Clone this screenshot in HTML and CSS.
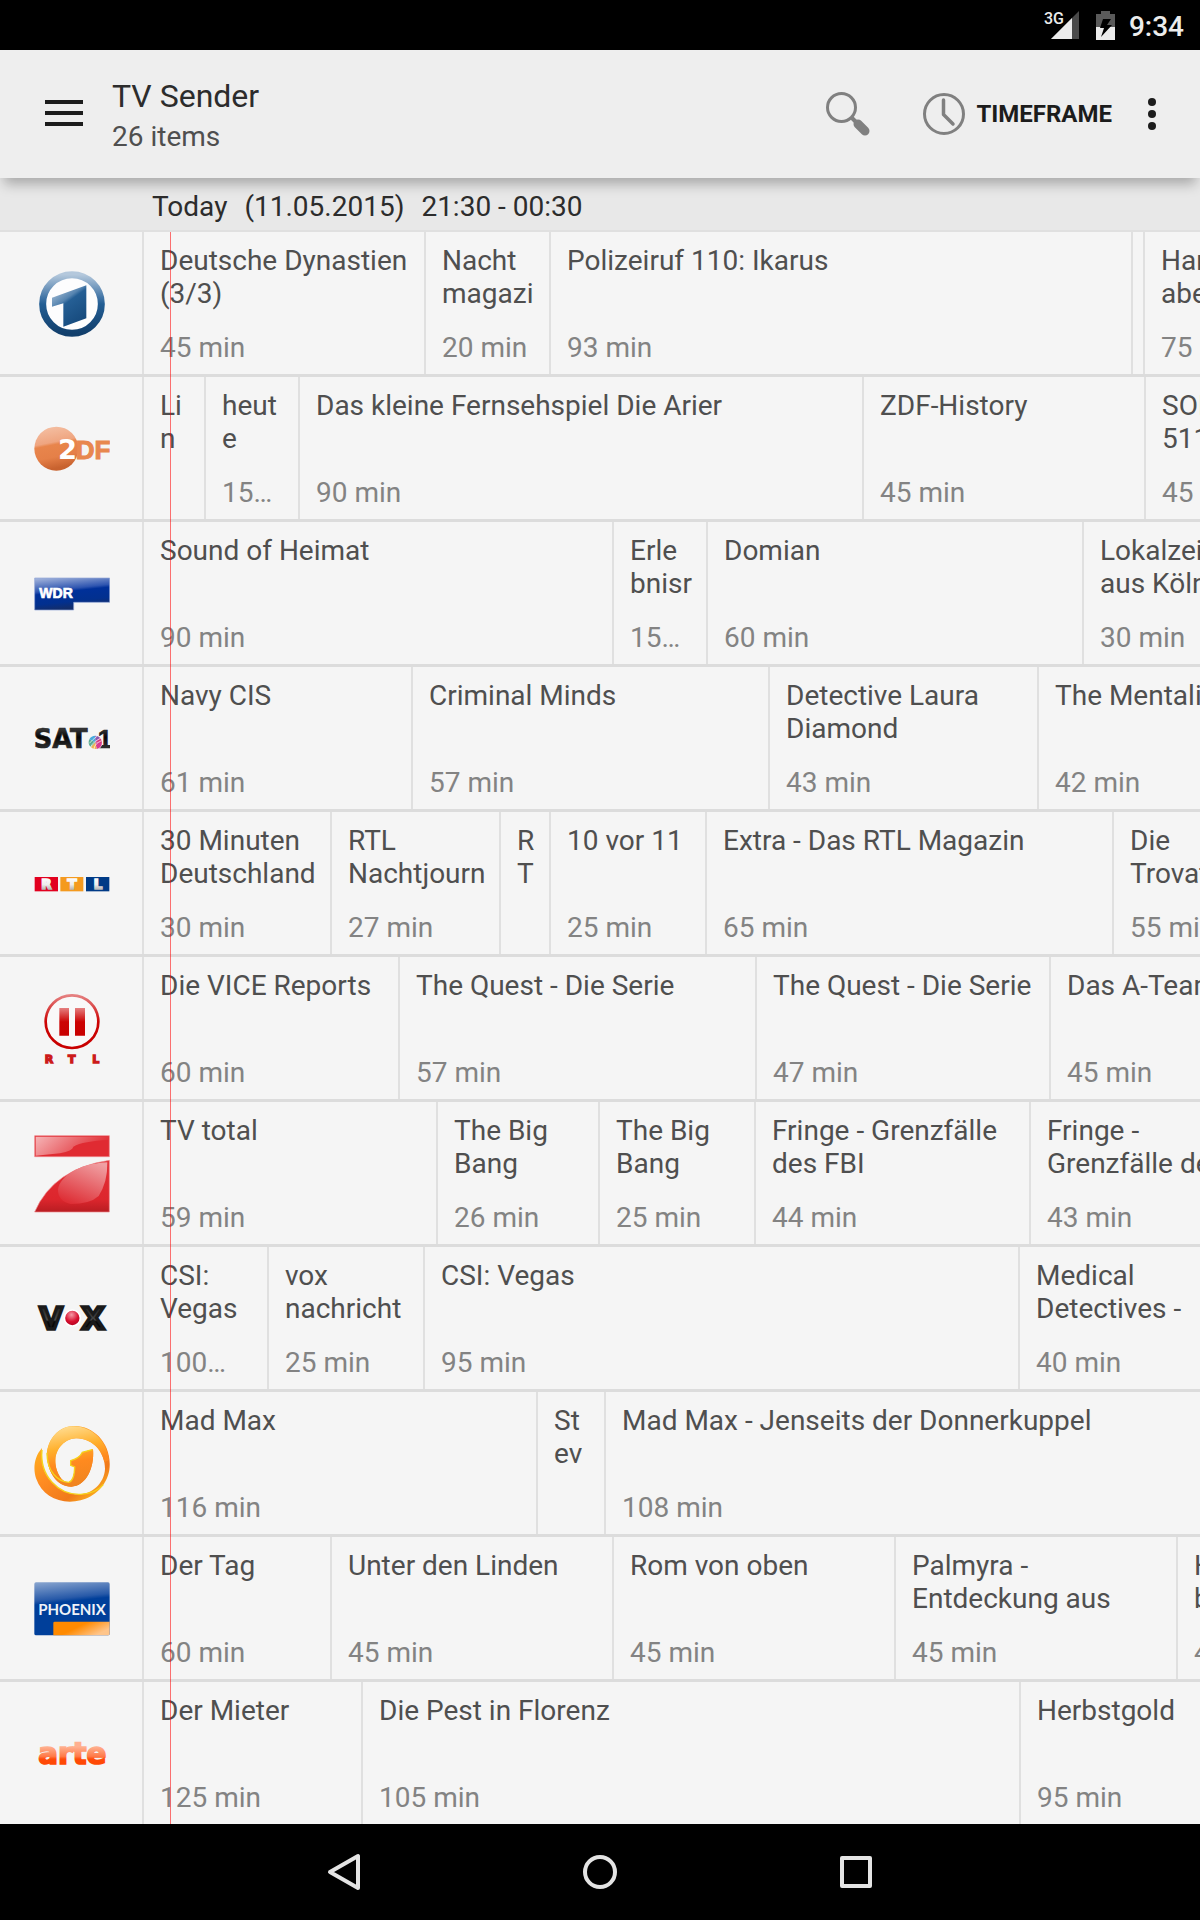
FILE: index.html
```html
<!DOCTYPE html>
<html lang="de">
<head>
<meta charset="utf-8">
<meta name="viewport" content="width=device-width, initial-scale=1">
<title>TV Sender</title>
<link rel="stylesheet" href="styles.css">
</head>
<body>
<div class="screen">
  <div class="status">
    <svg class="signal" viewBox="0 0 36 30" aria-label="3G">
      <path d="M35 1V29H7Z" fill="#4a4a4a"/>
      <path d="M28 8V29H7Z" fill="#ececec"/>
      <text x="0" y="14" class="network">3G</text>
    </svg>
    <svg class="battery" viewBox="0 0 19 29" aria-label="Battery">
      <path d="M0 3H5V0H14V3H19V16H0Z" fill="#5a5a5a"/>
      <path d="M0 16H19V29H0Z" fill="#ececec"/>
      <path d="M7 8H15L11 14H16L5 26L8 17H4Z" fill="#000"/>
    </svg>
    <time>9:34</time>
  </div>

  <header class="appbar">
    <button class="icon-button menu" aria-label="Menu">
      <svg width="38" height="28" viewBox="0 0 38 28"><path d="M0 2H38M0 13H38M0 24H38" stroke="#1c1c1c" stroke-width="4"/></svg>
    </button>
    <div class="titles">
      <h1>TV Sender</h1>
      <p>26 items</p>
    </div>
    <button class="icon-button search" aria-label="Search">
      <svg width="44" height="44" viewBox="0 0 44 44">
        <circle cx="15.500" cy="15.500" r="14" fill="none" stroke="#808080" stroke-width="3"/>
        <path d="M26 26L31 31" stroke="#808080" stroke-width="4"/>
        <path d="M32 32L39 39" stroke="#808080" stroke-width="9" stroke-linecap="round"/>
      </svg>
    </button>
    <button class="icon-button timeframe">
      <svg width="44" height="44" viewBox="0 0 44 44" fill="none" stroke="#808080">
        <circle cx="22" cy="22" r="19.500" stroke-width="3"/>
        <path d="M21.500 8V22.500L31 32" stroke-width="3.500" stroke-linecap="round" stroke-linejoin="round"/>
      </svg>
      Timeframe
    </button>
    <button class="icon-button more" aria-label="More options">
      <svg width="8" height="32" viewBox="0 0 8 32" fill="#1c1c1c"><circle cx="4" cy="4" r="4"/><circle cx="4" cy="16" r="4"/><circle cx="4" cy="28" r="4"/></svg>
    </button>
  </header>

  <h2 class="range"><span>Today</span> <span>(11.05.2015)</span> <span>21:30 - 00:30</span></h2>

  <main class="guide">
    <section class="channel" aria-label="Das Erste">
      <div class="logo"><svg viewBox="102 99 228 240">
        <defs><linearGradient id="ard" x1="0" y1="0" x2="0" y2="1"><stop offset="0" stop-color="#b4c8dc"/><stop offset=".4" stop-color="#3f73a5"/><stop offset=".5" stop-color="#235e94"/><stop offset="1" stop-color="#123f6c"/></linearGradient>
        <linearGradient id="ard1" x1="0" y1="0" x2=".6" y2="1"><stop offset="0" stop-color="#c6d5e4"/><stop offset=".42" stop-color="#5684b0"/><stop offset=".5" stop-color="#255f95"/><stop offset="1" stop-color="#174b7e"/></linearGradient></defs>
        <circle cx="216" cy="222" r="88" fill="#fdfdfe" stroke="url(#ard)" stroke-width="21"/>
        <path d="M156 203L259 166V265L190 290V220L156 230Z" fill="url(#ard1)"/>
      </svg></div>
      <ol class="programmes">
        <li style="width:282px"><h3>Deutsche Dynastien (3/3)</h3><p>45 min</p></li>
        <li style="width:125px"><h3>Nacht magazi</h3><p>20 min</p></li>
        <li style="width:582px"><h3>Polizeiruf 110: Ikarus</h3><p>93 min</p></li>
        <li class="sliver" style="width:12px"></li>
        <li><h3>Hart aber</h3><p>75 min</p></li>
      </ol>
    </section>

    <section class="channel" aria-label="ZDF">
      <div class="logo"><svg viewBox="102 534 228 240">
        <defs><linearGradient id="zdf" x1="0" y1="0" x2=".2" y2="1"><stop offset="0" stop-color="#f5c3a8"/><stop offset=".42" stop-color="#efa580"/><stop offset=".48" stop-color="#e8854c"/><stop offset=".75" stop-color="#e58048"/><stop offset="1" stop-color="#c8622f"/></linearGradient></defs>
        <circle cx="169" cy="656" r="66" fill="url(#zdf)"/>
        <text x="174" y="687" font-size="82" class="wide" fill="#fff">2</text>
        <text x="227" y="686" font-size="78" class="narrow" fill="#e8874f" stroke="#e8874f" stroke-width="3">DF</text>
      </svg></div>
      <ol class="programmes">
        <li style="width:62px"><h3>Lin</h3></li>
        <li style="width:94px"><h3>heute</h3><p>15…</p></li>
        <li style="width:564px"><h3>Das kleine Fernsehspiel Die Arier</h3><p>90 min</p></li>
        <li style="width:282px"><h3>ZDF-History</h3><p>45 min</p></li>
        <li><h3>SOKO 5113</h3><p>45 min</p></li>
      </ol>
    </section>

    <section class="channel" aria-label="WDR">
      <div class="logo"><svg viewBox="102 969 228 240">
        <defs><linearGradient id="wdr" x1="0" y1="0" x2=".25" y2="1"><stop offset="0" stop-color="#a9b9de"/><stop offset=".42" stop-color="#2e55b0"/><stop offset=".5" stop-color="#003099"/><stop offset=".8" stop-color="#02308f"/><stop offset="1" stop-color="#132d6a"/></linearGradient></defs>
        <path d="M104 1044H329V1117H221V1140H104Z" fill="url(#wdr)" stroke="#8ea5d6" stroke-width="2"/>
        <text x="118" y="1103" font-size="42" class="narrow" fill="#fff" stroke="#fff" stroke-width="2">WDR</text>
      </svg></div>
      <ol class="programmes">
        <li style="width:470px"><h3>Sound of Heimat</h3><p>90 min</p></li>
        <li style="width:94px"><h3>Erle<wbr>bnisr</h3><p>15…</p></li>
        <li style="width:376px"><h3>Domian</h3><p>60 min</p></li>
        <li><h3>Lokalzeit aus Köln</h3><p>30 min</p></li>
      </ol>
    </section>

    <section class="channel" aria-label="SAT.1">
      <div class="logo"><svg viewBox="102 114 228 240">
        <defs><linearGradient id="sat" x1="0" y1="0" x2="0" y2="1"><stop offset="0" stop-color="#555"/><stop offset=".45" stop-color="#050505"/><stop offset="1" stop-color="#444"/></linearGradient></defs>
        <text x="101" y="263" font-size="77" class="wide" fill="url(#sat)" stroke="#222" stroke-width="2">SAT</text>
        <text x="293" y="263" font-size="77" class="narrow" fill="url(#sat)" stroke="#222" stroke-width="2">1</text>
        <circle cx="286" cy="247" r="22" fill="#f5f5f5"/>
        <path d="M286 247L268 238A20 20 0 0 1 286 227Z" fill="#48a9dc"/>
        <path d="M286 247V227A20 20 0 0 1 300 233Z" fill="#8a57ae"/>
        <path d="M286 247L300 233A20 20 0 0 1 306 250Z" fill="#d8367b"/>
        <path d="M286 247L306 250A20 20 0 0 1 290 267Z" fill="#d83991"/>
        <path d="M286 247L290 267A20 20 0 0 1 272 261Z" fill="#f0b153"/>
        <path d="M286 247L272 261A20 20 0 0 1 268 238Z" fill="#5aab92"/>
        <path d="M272 261Q280 244 302 235M282 267Q284 250 305 242M268 250Q276 240 292 228" stroke="#fff" stroke-width="2" fill="none"/>
      </svg></div>
      <ol class="programmes">
        <li style="width:269px"><h3>Navy CIS</h3><p>61 min</p></li>
        <li style="width:357px"><h3>Criminal Minds</h3><p>57 min</p></li>
        <li style="width:269px"><h3>Detective Laura Diamond</h3><p>43 min</p></li>
        <li><h3>The Mentalist</h3><p>42 min</p></li>
      </ol>
    </section>

    <section class="channel" aria-label="RTL">
      <div class="logo"><svg viewBox="102 549 228 240">
        <defs><linearGradient id="chrome" x1="0" y1="0" x2="0" y2="1"><stop offset="0" stop-color="#fff"/><stop offset=".5" stop-color="#eee"/><stop offset="1" stop-color="#999"/></linearGradient></defs>
        <path d="M104 651H174V694H104Z" fill="#e2001f"/>
        <path d="M181 651H250V694H181Z" fill="#f49a1f"/>
        <path d="M258 651H328V694H258Z" fill="#003a86"/>
        <g class="wide" font-size="40" text-anchor="middle" fill="url(#chrome)" stroke="url(#chrome)" stroke-width="5"><text x="139" y="687">R</text><text x="216" y="687">T</text><text x="294" y="687">L</text></g>
      </svg></div>
      <ol class="programmes">
        <li style="width:188px"><h3>30 Minuten Deutschland</h3><p>30 min</p></li>
        <li style="width:169px"><h3>RTL Nachtjourn</h3><p>27 min</p></li>
        <li style="width:50px"><h3>RT</h3></li>
        <li style="width:156px"><h3>10 vor 11</h3><p>25 min</p></li>
        <li style="width:407px"><h3>Extra - Das RTL Magazin</h3><p>65 min</p></li>
        <li><h3>Die Trovatos</h3><p>55 min</p></li>
      </ol>
    </section>

    <section class="channel" aria-label="RTL II">
      <div class="logo"><svg viewBox="102 984 228 240">
        <defs><linearGradient id="rtl2" x1="0" y1="0" x2="0" y2="1"><stop offset="0" stop-color="#e58080"/><stop offset=".5" stop-color="#cc0404"/><stop offset="1" stop-color="#c80000"/></linearGradient></defs>
        <circle cx="216" cy="1085" r="79" fill="#f9f9f9" stroke="url(#rtl2)" stroke-width="8"/>
        <path d="M178 1044H207V1127H178ZM225 1044H255V1127H225Z" fill="url(#rtl2)"/>
        <g class="wide" font-size="33" text-anchor="middle" fill="#cc1a1a" stroke="#cc1a1a" stroke-width="4"><text x="147" y="1209">R</text><text x="215" y="1209">T</text><text x="287" y="1209">L</text></g>
      </svg></div>
      <ol class="programmes">
        <li style="width:256px"><h3>Die VICE Reports</h3><p>60 min</p></li>
        <li style="width:357px"><h3>The Quest - Die Serie</h3><p>57 min</p></li>
        <li style="width:294px"><h3>The Quest - Die Serie</h3><p>47 min</p></li>
        <li><h3>Das A-Team</h3><p>45 min</p></li>
      </ol>
    </section>

    <section class="channel" aria-label="ProSieben">
      <div class="logo"><svg viewBox="102 129 228 240">
        <defs><linearGradient id="pro" x1="0" y1="0" x2="1" y2=".3"><stop offset="0" stop-color="#f6b5b7"/><stop offset="1" stop-color="#e02b32"/></linearGradient>
        <linearGradient id="pro7" x1="0" y1="0" x2="0" y2="1"><stop offset="0" stop-color="#e22f36"/><stop offset=".75" stop-color="#dd262d"/><stop offset="1" stop-color="#b81d22"/></linearGradient>
        <linearGradient id="proshine" x1=".8" y1="0" x2=".3" y2="1"><stop offset="0" stop-color="#f0a0a3"/><stop offset="1" stop-color="#de2f36"/></linearGradient></defs>
        <path d="M104 137H328V200H104Z" fill="#e02b32" stroke="#ee8b8e" stroke-width="2"/>
        <path d="M107 140H325V150Q250 153 220 170Q218 182 180 190L107 197Z" fill="url(#pro)"/>
        <path d="M328 211V366H104Q160 236 328 211Z" fill="url(#pro7)" stroke="#ee8b8e" stroke-width="2"/>
        <path d="M322 217Q323 276 296 318Q270 342 212 342Q173 333 174 298C180 258 240 220 322 217Z" fill="url(#proshine)"/>
      </svg></div>
      <ol class="programmes">
        <li style="width:294px"><h3>TV total</h3><p>59 min</p></li>
        <li style="width:162px"><h3>The Big Bang</h3><p>26 min</p></li>
        <li style="width:156px"><h3>The Big Bang</h3><p>25 min</p></li>
        <li style="width:275px"><h3>Fringe - Grenzfälle des FBI</h3><p>44 min</p></li>
        <li><h3>Fringe - Grenzfälle des</h3><p>43 min</p></li>
      </ol>
    </section>

    <section class="channel" aria-label="VOX">
      <div class="logo"><svg viewBox="102 564 228 240">
        <defs><radialGradient id="voxdot" cx=".45" cy=".3" r=".7"><stop offset="0" stop-color="#f59aa6"/><stop offset=".6" stop-color="#d8102f"/><stop offset="1" stop-color="#b00020"/></radialGradient>
        <linearGradient id="vox" x1="0" y1="0" x2="0" y2="1"><stop offset="0" stop-color="#111"/><stop offset=".55" stop-color="#4a4a4a"/><stop offset=".6" stop-color="#0a0a0a"/><stop offset="1" stop-color="#000"/></linearGradient></defs>
        <g class="wide" font-size="90" text-anchor="middle" fill="url(#vox)" stroke="#1a1a1a" stroke-width="10"><text x="153" y="716">V</text><text x="279" y="716">X</text></g>
        <circle cx="217" cy="684" r="24" fill="url(#voxdot)" stroke="#fff" stroke-width="5"/>
      </svg></div>
      <ol class="programmes">
        <li style="width:125px"><h3>CSI: Vegas</h3><p>100…</p></li>
        <li style="width:156px"><h3>vox nachricht</h3><p>25 min</p></li>
        <li style="width:595px"><h3>CSI: Vegas</h3><p>95 min</p></li>
        <li><h3>Medical Detectives -</h3><p>40 min</p></li>
      </ol>
    </section>

    <section class="channel" aria-label="kabel eins">
      <div class="logo"><svg viewBox="102 999 228 240">
        <defs><linearGradient id="swirl" x1=".3" y1="0" x2=".5" y2="1"><stop offset="0" stop-color="#ffdc90"/><stop offset=".35" stop-color="#ffb02c"/><stop offset=".6" stop-color="#ff8a1f"/><stop offset="1" stop-color="#ef8420"/></linearGradient>
        <linearGradient id="swirl2" x1="0" y1="0" x2=".8" y2="1"><stop offset="0" stop-color="#ffc81a"/><stop offset=".5" stop-color="#ff8c22"/><stop offset=".8" stop-color="#f07a1a"/><stop offset="1" stop-color="#ffba20"/></linearGradient></defs>
        <path d="M126 1074C100 1103 100 1140 108 1165C128 1222 184 1245 242 1231C282 1221 320 1188 328 1140C339 1058 274 1000 212 1009C166 1015 139 1060 141 1100C144 1148 172 1190 214 1190C257 1189 284 1135 279 1078L247 1087Q240 1104 212 1112V1126L224 1131C222 1157 219 1174 204 1177C181 1176 165 1138 166 1110C168 1072 198 1046 228 1045C283 1046 315 1088 315 1137C313 1181 274 1213 237 1213C180 1213 127 1164 126 1106Q125 1088 126 1074Z" fill="url(#swirl2)"/>
        <path d="M141 1100C139 1060 166 1015 212 1009C270 1003 322 1050 327 1110L313 1117C304 1074 270 1045 228 1045C198 1046 168 1072 166 1110C165 1138 181 1176 204 1177C219 1174 222 1157 224 1131L212 1126V1112Q240 1104 247 1087L279 1078C284 1135 257 1189 214 1190C172 1190 144 1148 141 1100Z" fill="url(#swirl)"/>
        <path d="M141 1088C141 1146 174 1175 206 1177Q223 1173 224 1131L212 1126V1112Q240 1104 247 1087L277 1079M126 1080C118 1158 176 1216 242 1213Q288 1210 310 1184" fill="none" stroke="#f5d21c" stroke-width="4"/>
      </svg></div>
      <ol class="programmes">
        <li style="width:394px"><h3>Mad Max</h3><p>116 min</p></li>
        <li style="width:68px"><h3>St<wbr>ev</h3></li>
        <li><h3>Mad Max - Jenseits der Donnerkuppel</h3><p>108 min</p></li>
      </ol>
    </section>

    <section class="channel" aria-label="PHOENIX">
      <div class="logo"><svg viewBox="102 114 228 240">
        <defs><linearGradient id="phx" x1="0" y1="0" x2=".15" y2="1"><stop offset="0" stop-color="#8aa6d0"/><stop offset=".35" stop-color="#2759a8"/><stop offset=".42" stop-color="#003f9a"/><stop offset="1" stop-color="#003f9a"/></linearGradient>
        <linearGradient id="phxo" x1="0" y1="0" x2="1" y2=".5"><stop offset=".5" stop-color="#ff8a00"/><stop offset="1" stop-color="#ffc58a"/></linearGradient></defs>
        <rect x="103" y="157" width="226" height="159" rx="5" fill="url(#phx)"/>
        <path d="M160 316V279Q160 275 164 275H329V311Q329 316 324 316Z" fill="url(#phxo)"/>
        <text x="216" y="254" font-size="45" class="humanist" text-anchor="middle" fill="#eef2f8">PHOENIX</text>
      </svg></div>
      <ol class="programmes">
        <li style="width:188px"><h3>Der Tag</h3><p>60 min</p></li>
        <li style="width:282px"><h3>Unter den Linden</h3><p>45 min</p></li>
        <li style="width:282px"><h3>Rom von oben</h3><p>45 min</p></li>
        <li style="width:282px"><h3>Palmyra - Entdeckung aus</h3><p>45 min</p></li>
        <li><h3>Hier bei</h3><p>45 min</p></li>
      </ol>
    </section>

    <section class="channel" aria-label="arte">
      <div class="logo"><svg viewBox="102 549 228 240">
        <defs><linearGradient id="arte" x1="0" y1="0" x2="0" y2="1"><stop offset=".3" stop-color="#ffb090"/><stop offset=".58" stop-color="#ff7a48"/><stop offset=".66" stop-color="#ff4a08"/><stop offset="1" stop-color="#ff4400"/></linearGradient></defs>
        <text x="217" y="701" font-size="88" class="wide" text-anchor="middle" fill="url(#arte)" stroke="url(#arte)" stroke-width="5">arte</text>
      </svg></div>
      <ol class="programmes">
        <li style="width:219px"><h3>Der Mieter</h3><p>125 min</p></li>
        <li style="width:658px"><h3>Die Pest in Florenz</h3><p>105 min</p></li>
        <li><h3>Herbstgold</h3><p>95 min</p></li>
      </ol>
    </section>
    <div class="now"></div>
  </main>

  <nav class="navbar">
    <button aria-label="Back"><svg viewBox="0 0 40 40"><path d="M34 4V36L6 20Z"/></svg></button>
    <button aria-label="Home"><svg viewBox="0 0 40 40"><circle cx="20" cy="20" r="15"/></svg></button>
    <button aria-label="Recent apps"><svg viewBox="0 0 40 40"><rect x="6" y="6" width="28" height="28"/></svg></button>
  </nav>
</div>
</body>
</html>
```

FILE: styles.css
```css
* {
  box-sizing: border-box;
  margin: 0;
  padding: 0;
}

body {
  background: #f5f5f5;
  color: #4f4f4f;
  font: 28px/33px Roboto, sans-serif;
}

h1, h2, h3 {
  font-size: 28px;
  font-weight: 400;
}

button {
  border: 0;
  background: none;
  color: inherit;
  font: inherit;
}

svg {
  display: block;
}

.screen {
  display: flex;
  flex-direction: column;
  min-height: 100vh;
  overflow: hidden;
}

.status {
  display: flex;
  align-items: center;
  justify-content: flex-end;
  height: 50px;
  padding-right: 16px;
  background: #000;
  color: #ececec;
  font-weight: 500;
}

.status time {
  padding-top: 2px;
}

.signal {
  width: 36px;
  height: 30px;
  margin-right: 16px;
}

.network {
  fill: #ececec;
  font: 500 16px Roboto, sans-serif;
}

.battery {
  width: 19px;
  height: 29px;
  margin-right: 14px;
}

.appbar {
  position: relative;
  z-index: 1;
  display: flex;
  align-items: center;
  height: 128px;
  padding: 0 24px 0 32px;
  background: #eee;
  box-shadow: 0 10px 12px -4px rgba(0, 0, 0, 0.28);
}

.icon-button {
  display: flex;
  align-items: center;
  justify-content: center;
  height: 64px;
}

.menu {
  width: 64px;
}

.titles {
  flex: 1;
  margin-left: 16px;
  padding-top: 4px;
  line-height: 40px;
}

.titles h1 {
  color: #2c2c2c;
  font-size: 32px;
  line-height: 42px;
}

.search {
  width: 64px;
  margin-right: 42px;
}

.timeframe {
  gap: 10px;
  color: #1c1c1c;
  font-size: 24px;
  font-weight: 700;
  text-transform: uppercase;
}

.more {
  width: 48px;
  margin-left: 16px;
}

.range {
  display: flex;
  gap: 17px;
  height: 54px;
  padding: 12px 0 0 152px;
  border-bottom: 2px solid #e0e0e0;
  background: #e8e8e8;
  color: #2c2c2c;
}

.guide {
  position: relative;
  flex: 1;
}

.channel {
  display: flex;
  height: 145px;
  border-bottom: 3px solid #dcdcdc;
  overflow: hidden;
}

.channel:last-of-type {
  height: 142px;
  border-bottom: 0;
}

.logo {
  display: flex;
  flex: none;
  align-items: center;
  width: 144px;
  padding-left: 34px;
  border-right: 2px solid #e0e0e0;
}

.logo svg {
  width: 76px;
  height: 80px;
}

.wide {
  font-family: "DejaVu Sans", sans-serif;
  font-weight: 700;
}

.narrow {
  font-family: "Liberation Sans", sans-serif;
  font-weight: 700;
}

.humanist {
  font-family: Lato, sans-serif;
  font-weight: 700;
}

/* Three hours of programme; it runs past the right edge and is cut there. */
.programmes {
  display: flex;
  flex: none;
  width: 1128px;
  list-style: none;
}

.programmes li {
  display: flex;
  flex: none;
  flex-direction: column;
  justify-content: space-between;
  padding: 12px 12px 10px 16px;
  border-right: 2px solid #e0e0e0;
}

.programmes li:last-child {
  flex: 1;
  min-width: 0;
}

.programmes .sliver {
  padding: 0;
}

.programmes h3 {
  overflow-wrap: anywhere;
}

.programmes p {
  color: #838383;
  white-space: nowrap;
}

.now {
  position: absolute;
  top: 0;
  bottom: 0;
  left: 170px;
  width: 1px;
  background: rgba(255, 0, 0, 0.55);
}

.navbar {
  display: flex;
  justify-content: center;
  height: 96px;
  background: #000;
}

.navbar button {
  display: flex;
  align-items: center;
  justify-content: center;
  width: 256px;
}

.navbar svg {
  width: 40px;
  height: 40px;
  fill: none;
  stroke: #e4e4e4;
  stroke-width: 4;
  stroke-linejoin: round;
}
```
